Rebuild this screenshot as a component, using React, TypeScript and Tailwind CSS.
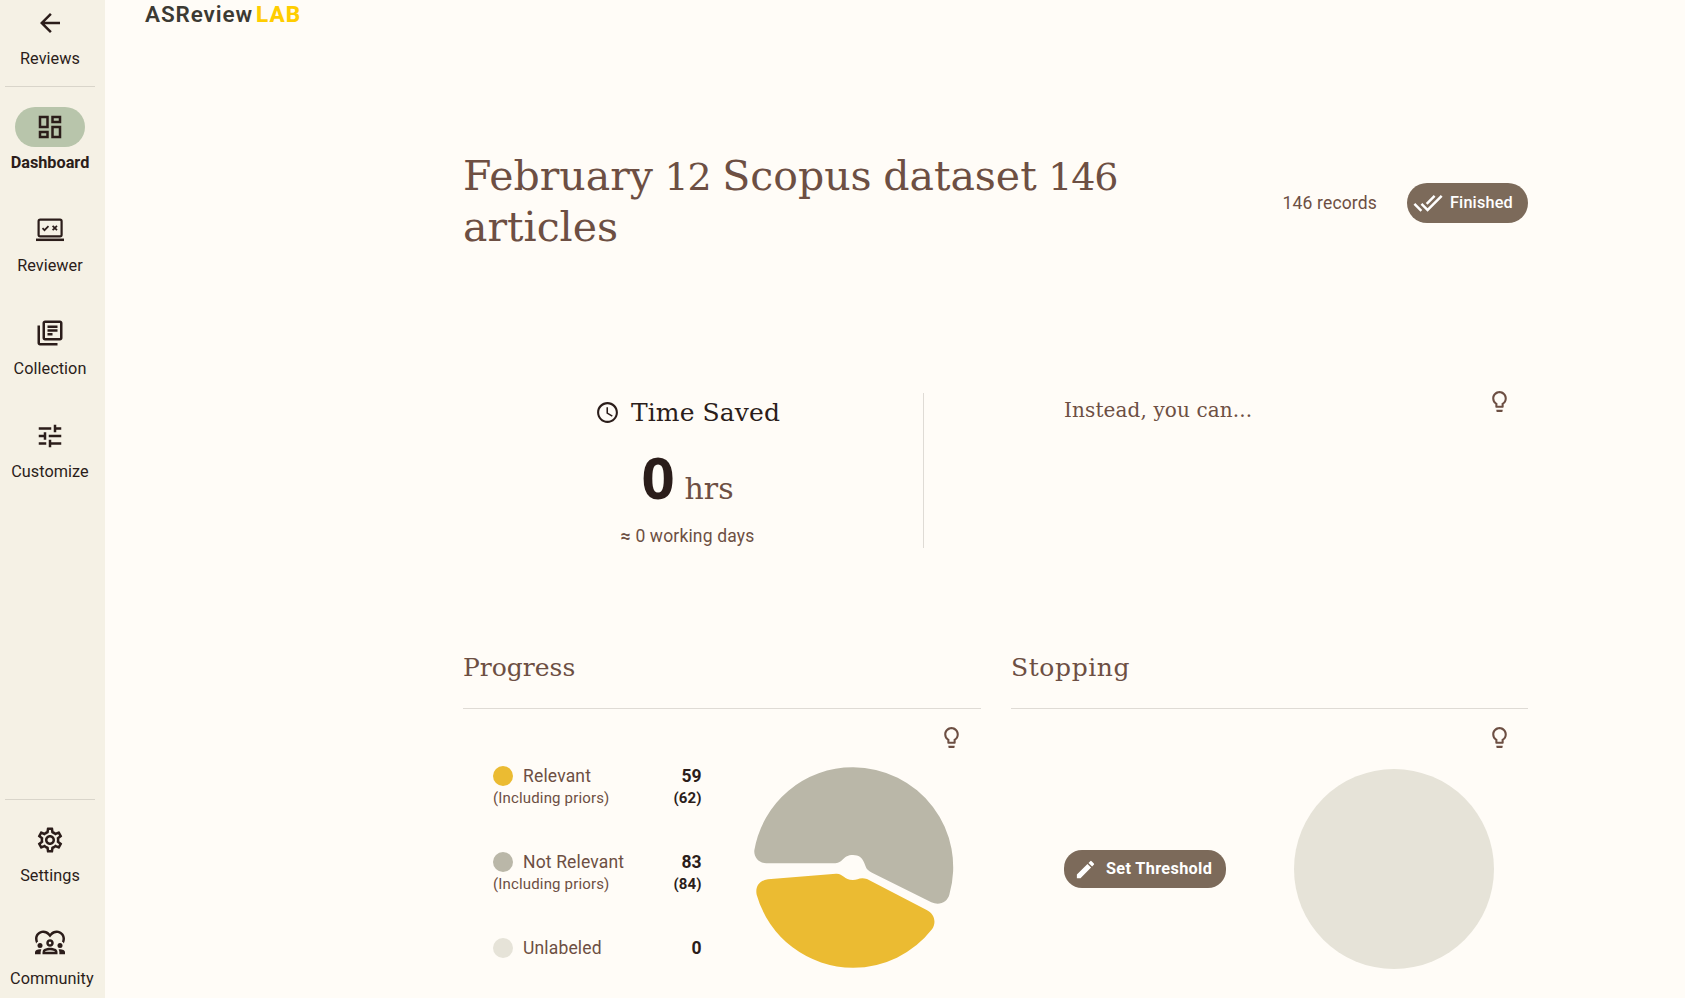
import type { ReactNode } from "react";
import {
  MdAccessTime,
  MdArrowBack,
  MdDoneAll,
  MdEdit,
  MdOutlineDashboard,
  MdOutlineDiversity1,
  MdOutlineLibraryBooks,
  MdOutlineLightbulb,
  MdOutlineSettings,
  MdTune,
} from "react-icons/md";

function ReviewerIcon() {
  return (
    <svg width="30" height="30" viewBox="0 0 30 30" fill="none" stroke="currentColor">
      <rect x="3.6" y="4.6" width="23" height="16.8" rx="1.6" strokeWidth="2.2" />
      <path d="M1 24.8h28" strokeWidth="2.5" />
      <path d="M7.5 13.2l2 2 4-4M17.6 10.8l4.4 4.4M22 10.800l-4.400 4.400" strokeWidth="1.7" />
    </svg>
  );
}

function NavItem({ icon, label, active = false }: { icon: ReactNode; label: string; active?: boolean }) {
  return (
    <a className="flex h-[103px] w-[100px] shrink-0 flex-col items-center">
      <span className={active ? "flex h-10 w-[70px] items-center justify-center rounded-full bg-[#b8c5ab]" : "flex h-10 w-[70px] items-center justify-center"}>
        {icon}
      </span>
      <span className={active ? "mt-1 text-[16.25px] leading-6 font-bold" : "mt-1 w-20 text-center text-[16.25px] leading-6 tracking-[0.05px] whitespace-nowrap"}>{label}</span>
    </a>
  );
}

function LegendRow({ dot, label, value, priors }: { dot: string; label: string; value: string; priors?: string }) {
  return (
    <div className="h-[86px]">
      <div className="flex h-[22px] items-center">
        <span className={`size-5 rounded-full ${dot}`} />
        <span className="ml-2.5 text-[17.5px] tracking-[0.16px]">{label}</span>
        <span className="ml-auto text-[17.5px] font-bold text-[#2b1d1a]">{value}</span>
      </div>
      {priors && (
        <div className="flex h-[23px] items-center justify-between text-[15px]">
          <span className="tracking-[0.16px]">(Including priors)</span>
          <span className="font-bold tracking-[0.1px] text-[#2b1d1a]">{priors}</span>
        </div>
      )}
    </div>
  );
}

const serif = "font-['DejaVu_Serif',serif]";

export default function App() {
  return (
    <div className="flex h-[998px] w-[1685px] overflow-hidden bg-[#fffcf7] font-[Roboto,sans-serif] text-[#6d4f43]">
      <nav className="flex w-[105px] shrink-0 flex-col bg-[#f5f1e5] pt-[3px] text-[#2b1d1a]">
        <div className="h-[83px] shrink-0">
          <NavItem icon={<MdArrowBack size={30} />} label="Reviews" />
        </div>
        <div className="ml-[5px] h-px w-[90px] shrink-0 bg-[#d9d5ca]" />
        <div className="mt-5 flex flex-col">
          <NavItem active icon={<MdOutlineDashboard size={30} />} label="Dashboard" />
          <NavItem icon={<ReviewerIcon />} label="Reviewer" />
          <NavItem icon={<MdOutlineLibraryBooks size={30} />} label="Collection" />
          <NavItem icon={<MdTune size={30} />} label="Customize" />
        </div>
        <div className="mt-[280px] ml-[5px] h-px w-[90px] shrink-0 bg-[#d9d5ca]" />
        <div className="mt-5 flex flex-col">
          <NavItem icon={<MdOutlineSettings size={30} />} label="Settings" />
          <NavItem icon={<MdOutlineDiversity1 size={30} />} label="Community" />
        </div>
      </nav>

      <main className="flex-1">
        <div className="ml-10 flex h-[151px] items-start gap-[3px] text-[22.5px] leading-7">
          <span className="font-semibold tracking-[0.9px] text-[#3c3a33]">ASReview</span>
          <span className="font-extrabold tracking-[1px] text-[#ffcd00]">LAB</span>
        </div>

        <div className="ml-[358px] w-[1065px]">
          <header className="flex h-[102px] items-center">
            <h1 className={`${serif} w-[700px] text-[41px] leading-[49.5px] [word-spacing:-1.4px]`}>
              February <span className="text-[38px] tracking-[-1.2px]">12</span> Scopus dataset{" "}
              <span className="text-[38px] tracking-[-1.2px]">146</span> articles
            </h1>
            <span className="mt-0.5 ml-auto text-[17.5px] tracking-[0.16px]">146 records</span>
            <span className="mt-0.5 ml-[30px] flex h-10 w-[121px] items-center rounded-full bg-[#7c6a5a] pl-1.5 text-[16.25px] font-medium tracking-[0.16px] text-white">
              <MdDoneAll size={30} />
              <span className="ml-[7px]">Finished</span>
            </span>
          </header>

          <section className="mt-[140px] flex h-[155px]">
            <div className="mr-[11px] flex w-[449px] flex-col items-center">
              <div className="mt-px flex h-[38px] items-center gap-[11px] text-[#2b1d1a]">
                <MdAccessTime size={25} />
                <h2 className={`${serif} text-[25px] tracking-[0.1px]`}>Time Saved</h2>
              </div>
              <div className="mt-2 flex h-[72px] items-baseline gap-2.5">
                <span className="font-['Open_Sans',sans-serif] text-[58px] leading-[73px] font-bold text-[#2b1d1a]">0</span>
                <span className={`${serif} text-[30px]`}>hrs</span>
              </div>
              <p className="mt-[11px] text-[17.5px] tracking-[0.16px]"><span className="font-bold">≈</span> 0 working days</p>
            </div>
            <div className="h-full w-px bg-[#dfdbd5]" />
            <div className="flex flex-1 justify-between pr-4 pl-[140px]">
              <p className={`${serif} mt-0.5 text-[20px] tracking-[0.12px]`}>Instead, you can...</p>
              <MdOutlineLightbulb size={25} className="mt-[-4px]" />
            </div>
          </section>

          <div className="mt-[101px] flex gap-[30px]">
            <section className="w-[518px]">
              <h2 className={`${serif} flex h-[60px] items-start border-b border-[#dfdbd5] text-[25px]`}>Progress</h2>
              <div className="flex pl-[30px]">
                <div className="w-[208.500px] pt-14">
                  <LegendRow dot="bg-[#ebbb32]" label="Relevant" value="59" priors="(62)" />
                  <LegendRow dot="bg-[#bab7a8]" label="Not Relevant" value="83" priors="(84)" />
                  <LegendRow dot="bg-[#e6e3d8]" label="Unlabeled" value="0" />
                </div>
                <div className="ml-[38.500px] flex w-[230px] flex-col">
                  <MdOutlineLightbulb size={25} className="mt-4 ml-[199px]" />
                  <svg className="block" width="230" height="230" viewBox="0 0 690 690">
                    <path fill="#bab7a8" d="M79 339.500H286C310 339 308 315 339 315C375 315 372 350 384 360Q387 364 396 368L574 457C600 468 622 455 628 434A299.500 299.500 0 0 0 339 52A299.500 299.500 0 0 0 43 301C41 322 57 339.500 79 339.500Z" />
                    <path fill="#ebbb32" d="M84 388L288 371.500C309 370 311 390 339 390C353 390 360 380 381 387L560 480C580 489 592 515 576 538A300 300 0 0 1 339 653A300 300 0 0 1 50 434C45 410 58 391 84 388Z" />
                  </svg>
                </div>
              </div>
            </section>
            <section className="w-[517px]">
              <h2 className={`${serif} flex h-[60px] items-start border-b border-[#dfdbd5] text-[25px] tracking-[0.6px]`}>Stopping</h2>
              <div className="flex h-[290px] items-start pl-[53px]">
                <button className="mt-[141px] flex h-[38px] w-[162px] items-center rounded-[18px] bg-[#7c6a5a] pl-2.5 text-[16.25px] font-bold tracking-[0.35px] text-white">
                  <MdEdit size={23} />
                  <span className="ml-[9px]">Set Threshold</span>
                </button>
                <div className="ml-[68px] flex flex-col">
                  <MdOutlineLightbulb size={25} className="mt-4 ml-[193px]" />
                  <div className="mt-[19px] size-[200px] rounded-full bg-[#e6e3d8]" />
                </div>
              </div>
            </section>
          </div>
        </div>
      </main>
    </div>
  );
}
